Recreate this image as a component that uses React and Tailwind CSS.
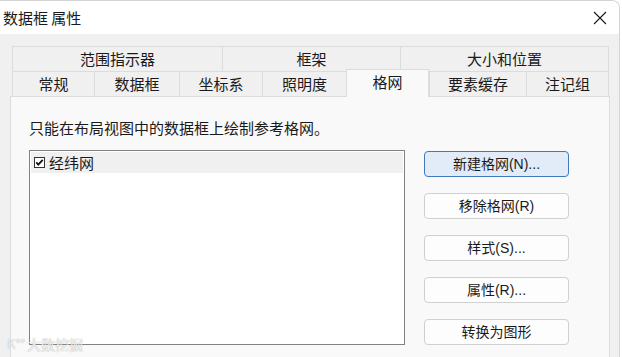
const TOP_TABS = [
    { label: '范围指示器', w: 'w-[210px]' },
    { label: '框架', w: 'w-[178px]' },
    { label: '大小和位置', w: 'w-[209px]' },
];

const BOTTOM_TABS = [
    { label: '常规', w: 'w-[82px]' },
    { label: '数据框', w: 'w-[85px]' },
    { label: '坐标系', w: 'w-[83px]' },
    { label: '照明度', w: 'w-[84px]' },
    { label: '格网', w: 'w-[83px]', active: true },
    { label: '要素缓存', w: 'w-[97px]' },
    { label: '注记组', w: 'w-[83px]' },
];

const BUTTONS = [
    { label: '新建格网(N)...', primary: true },
    { label: '移除格网(R)' },
    { label: '样式(S)...' },
    { label: '属性(R)...' },
    { label: '转换为图形' },
];

function CloseIcon() {
    return (
        <svg width="14" height="14" viewBox="0 0 14 14" fill="none" stroke="#1a1a1a" strokeWidth="1.1">
            <path d="M1 1 L13 13 M13 1 L1 13" />
        </svg>
    );
}

function CheckBox() {
    return (
        <svg width="11" height="11" viewBox="0 0 11 11" className="shrink-0">
            <rect x="0.5" y="0.5" width="10" height="10" fill="#fff" stroke="#333" />
            <path d="M2.3 5.4 L4.3 7.6 L8.7 2.8" fill="none" stroke="#111" strokeWidth="1.8" />
        </svg>
    );
}

export default function App() {
    return (
        <div className="w-[622px] h-[357px] overflow-hidden bg-white relative font-['Liberation_Sans','Noto_Sans_CJK_SC',sans-serif] text-[#1a1a1a]">
            <div className="w-[620px] h-[357px] flex flex-col rounded-tr-[8px] border-r border-t border-[#d4d4d4] overflow-hidden">
                {/* Title bar */}
                <div className="h-[33px] shrink-0 bg-white flex items-center justify-between pl-[3px] pr-[12px]">
                    <span className="text-[15px] leading-[20px] font-['Noto_Sans_CJK_SC',sans-serif]">数据框 属性</span>
                    <CloseIcon />
                </div>

                {/* Body */}
                <div className="flex-1 bg-[#f0f0f0] pl-[10px] pt-[12px] min-h-0">
                    {/* Tabs */}
                    <div className="ml-[2px] font-['Noto_Sans_CJK_SC',sans-serif] text-[15px]">
                        <div className="flex h-[25px]">
                            {TOP_TABS.map((t) => (
                                <div
                                    key={t.label}
                                    className={`${t.w} flex items-center justify-center border border-r-0 last:border-r border-b-0 border-[#dcdcdc] bg-[#f0f0f0] leading-[20px]`}
                                >
                                    {t.label}
                                </div>
                            ))}
                        </div>
                        <div className="flex h-[25px] items-end relative z-10">
                            {BOTTOM_TABS.map((t) =>
                                t.active ? (
                                    <div
                                        key={t.label}
                                        className={`${t.w} h-[28px] -mb-px flex items-start justify-center pt-[2px] border border-b-0 border-[#dcdcdc] bg-[#f9f9f9] leading-[20px]`}
                                    >
                                        {t.label}
                                    </div>
                                ) : (
                                    <div
                                        key={t.label}
                                        className={`${t.w} h-[25px] flex items-center justify-center border-t border-l last:border-r border-[#dcdcdc] bg-[#f0f0f0] leading-[20px]`}
                                    >
                                        {t.label}
                                    </div>
                                )
                            )}
                        </div>
                    </div>

                    {/* Panel */}
                    <div className="w-[600px] h-[270px] bg-[#f9f9f9] border border-[#dcdcdc] pl-[18px] pt-[21px]">
                        <div className="text-[15px] leading-[20px] font-['Noto_Sans_CJK_SC',sans-serif]">
                            只能在布局视图中的数据框上绘制参考格网。
                        </div>
                        <div className="flex mt-[12px]">
                            <div className="w-[376px] h-[195px] bg-white border border-[#828282] p-px">
                                <div className="h-[21px] bg-[#f0f0f0] flex items-center gap-[4px] pl-[3px]">
                                    <CheckBox />
                                    <span className="text-[15px] leading-[20px] font-['Noto_Sans_CJK_SC',sans-serif]">经纬网</span>
                                </div>
                            </div>
                            <div className="ml-[19px] mt-px flex flex-col gap-[16px]">
                                {BUTTONS.map((b) => (
                                    <button
                                        key={b.label}
                                        className={`w-[145px] h-[26px] rounded-[4px] border text-[14px] leading-[18px] flex items-center justify-center ${
                                            b.primary
                                                ? 'bg-[#e1ecf8] border-[#3f78bd]'
                                                : 'bg-[#fdfdfd] border-[#d0d0d0]'
                                        }`}
                                    >
                                        {b.label}
                                    </button>
                                ))}
                            </div>
                        </div>
                    </div>
                </div>
            </div>

            {/* Watermark */}
            <div className="absolute left-[7px] top-[336px] flex items-center gap-[2px] text-white/80 text-[14px] leading-[16px] font-['Noto_Sans_CJK_SC',sans-serif] [text-shadow:0_0_1px_#999]">
                <span className="text-[13px]">K°°</span>
                <span>大数挖掘</span>
            </div>
        </div>
    );
}
